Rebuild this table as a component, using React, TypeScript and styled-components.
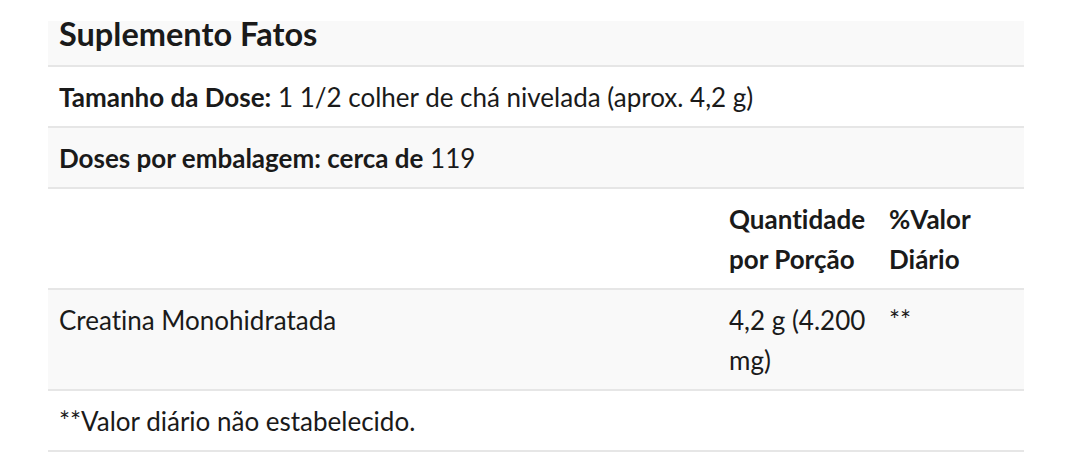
import React from 'react';
import styled, { createGlobalStyle } from 'styled-components';

const GlobalStyle = createGlobalStyle`
  body {
    margin: 0;
    background: #ffffff;
    font-family: Lato, "Open Sans", sans-serif;
    color: #1a1a1a;
    font-variant-ligatures: none;
  }
`;

const Page = styled.div`
  padding: 21px 48px 0 48px;
`;

const FactsTable = styled.table`
  width: 100%;
  border-collapse: collapse;
  table-layout: fixed;
  font-size: 26px;
  line-height: 40px;
`;

const Row = styled.tr<{ $shaded?: boolean }>`
  background: ${(p) => (p.$shaded ? '#f9f9f9' : '#ffffff')};
  border-bottom: 2px solid #e6e6e6;
`;

const Cell = styled.td<{ $bold?: boolean }>`
  padding: 10px 8px 9px 11px;
  vertical-align: top;
  font-weight: ${(p) => (p.$bold ? 700 : 400)};
`;

const TitleCell = styled.th`
  text-align: left;
  font-size: 32.5px;
  font-weight: 700;
  line-height: 26px;
  padding: 0 11px 18px 11px;
`;

const Label = styled.strong`
  font-weight: 700;
`;

export default function App() {
  return (
    <>
      <GlobalStyle />
      <Page>
        <FactsTable>
          <colgroup>
            <col style={{ width: 670 }} />
            <col style={{ width: 160 }} />
            <col style={{ width: 146 }} />
          </colgroup>
          <thead>
            <Row $shaded>
              <TitleCell colSpan={3}>Suplemento Fatos</TitleCell>
            </Row>
          </thead>
          <tbody>
            <Row>
              <Cell colSpan={3}>
                <Label>Tamanho da Dose:</Label> 1 1/2 colher de chá nivelada (aprox. 4,2 g)
              </Cell>
            </Row>
            <Row $shaded>
              <Cell colSpan={3}>
                <Label>Doses por embalagem: cerca de</Label> 119
              </Cell>
            </Row>
            <Row>
              <Cell></Cell>
              <Cell $bold>Quantidade por Porção</Cell>
              <Cell $bold>%Valor Diário</Cell>
            </Row>
            <Row $shaded>
              <Cell>Creatina Monohidratada</Cell>
              <Cell>4,2 g (4.200 mg)</Cell>
              <Cell>**</Cell>
            </Row>
            <Row>
              <Cell colSpan={3}>**Valor diário não estabelecido.</Cell>
            </Row>
          </tbody>
        </FactsTable>
      </Page>
    </>
  );
}
